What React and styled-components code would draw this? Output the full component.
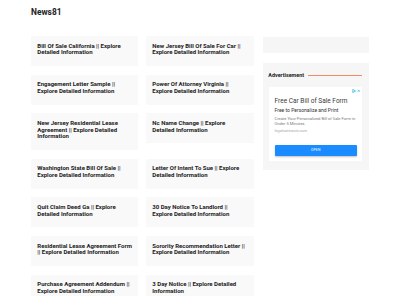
import styled, { createGlobalStyle } from 'styled-components';

const GlobalStyle = createGlobalStyle`
  body {
    margin: 0;
    background: #ffffff;
    font-family: Roboto, "Liberation Sans", sans-serif;
    color: #222222;
  }
`;

const Page = styled.div`
  width: 338px;
  margin: 0 auto;
`;

const Header = styled.div`
  padding-top: 7px;
  height: 36px;
  box-sizing: border-box;
`;

const SiteName = styled.div`
  font-size: 8.4px;
  line-height: 10px;
  font-weight: 700;
  color: #222222;
`;

const Content = styled.div`
  display: flex;
  gap: 9px;
  align-items: flex-start;
`;

const PostGrid = styled.div`
  width: 223px;
  display: grid;
  grid-template-columns: 107px 108px;
  column-gap: 8px;
  row-gap: 8.67px;
  align-items: start;
`;

const Card = styled.div`
  background: #f9f9f9;
  padding: 6.67px 6px 6.67px 6.3px;
`;

const CardTitle = styled.h2`
  margin: 0 0 3.33px;
  font-size: 6px;
  line-height: 6.67px;
  font-weight: 700;
  color: #222222;
`;

const Sidebar = styled.div`
  width: 106px;
  margin-top: 0.7px;
  display: flex;
  flex-direction: column;
  gap: 9.7px;
`;

const EmptyBox = styled.div`
  height: 16.67px;
  background: #f6f6f6;
`;

const Widget = styled.div`
  background: #f6f6f6;
  padding: 8.5px 6.67px 9.3px 5.3px;
`;

const WidgetHead = styled.div`
  display: flex;
  align-items: center;
  height: 7px;
  margin-bottom: 8.5px;
  font-size: 5.4px;
  font-weight: 700;
  color: #222222;
`;

const HeadLine = styled.div`
  flex: 1;
  margin-left: 4px;
  border-top: 1px solid #ef8a68;
`;

const AdBox = styled.div`
  position: relative;
  margin-left: 1px;
  background: #ffffff;
  height: 73.5px;
  box-sizing: border-box;
  padding: 11px 5.3px 0 5.3px;
`;

const AdChoices = styled.div`
  position: absolute;
  top: 1.5px;
  right: 1.5px;
  display: flex;
  gap: 1px;
  align-items: center;
`;

const AdTitle = styled.div`
  font-size: 6.5px;
  line-height: 7px;
  color: #3a3a3a;
  font-weight: 400;
`;

const AdSub = styled.div`
  margin-top: 2px;
  font-size: 5px;
  line-height: 6px;
  color: #333333;
`;

const AdDesc = styled.div`
  margin-top: 2.5px;
  font-size: 4.1px;
  line-height: 5px;
  color: #7a7a7a;
`;

const AdDomain = styled.div`
  margin-top: 3.2px;
  font-size: 3.8px;
  line-height: 4.5px;
  color: #a8a8a8;
`;

const AdButton = styled.div`
  margin-top: 11.7px;
  height: 11px;
  border-radius: 1px;
  background: #1a8cff;
  box-shadow: 0 1px 2px rgba(0, 0, 0, 0.25);
  color: #ffffff;
  font-size: 3.4px;
  display: flex;
  align-items: center;
  justify-content: center;
  letter-spacing: 0.2px;
`;

const posts = [
  'Bill Of Sale California || Explore Detailed Information',
  'New Jersey Bill Of Sale For Car || Explore Detailed Information',
  'Engagement Letter Sample || Explore Detailed Information',
  'Power Of Attorney Virginia || Explore Detailed Information',
  'New Jersey Residential Lease Agreement || Explore Detailed Information',
  'Nc Name Change || Explore Detailed Information',
  'Washington State Bill Of Sale || Explore Detailed Information',
  'Letter Of Intent To Sue || Explore Detailed Information',
  'Quit Claim Deed Ga || Explore Detailed Information',
  '30 Day Notice To Landlord || Explore Detailed Information',
  'Residential Lease Agreement Form || Explore Detailed Information',
  'Sorority Recommendation Letter || Explore Detailed Information',
  'Purchase Agreement Addendum || Explore Detailed Information',
  '3 Day Notice || Explore Detailed Information',
];

const App = () => {
  return (
    <Page>
      <GlobalStyle />
      <Header>
        <SiteName>News81</SiteName>
      </Header>
      <Content>
        <PostGrid>
          {posts.map((title, index) => (
            <Card key={index}>
              <CardTitle>{title}</CardTitle>
            </Card>
          ))}
        </PostGrid>
        <Sidebar>
          <EmptyBox />
          <Widget>
            <WidgetHead>
              Advertisement
              <HeadLine />
            </WidgetHead>
            <AdBox>
              <AdChoices>
                <svg width="4" height="4" viewBox="0 0 10 10">
                  <path d="M2 1 L9 5 L2 9 Z" fill="none" stroke="#00aecd" strokeWidth="1.6" />
                </svg>
                <svg width="3.5" height="3.5" viewBox="0 0 10 10">
                  <path d="M2 2 L8 8 M8 2 L2 8" stroke="#00aecd" strokeWidth="1.6" />
                </svg>
              </AdChoices>
              <AdTitle>Free Car Bill of Sale Form</AdTitle>
              <AdSub>Free to Personalize and Print</AdSub>
              <AdDesc>Create Your Personalized Bill of Sale Form in Under 5 Minutes.</AdDesc>
              <AdDomain>legalcontracts.com</AdDomain>
              <AdButton>OPEN</AdButton>
            </AdBox>
          </Widget>
        </Sidebar>
      </Content>
    </Page>
  );
};

export default App;
